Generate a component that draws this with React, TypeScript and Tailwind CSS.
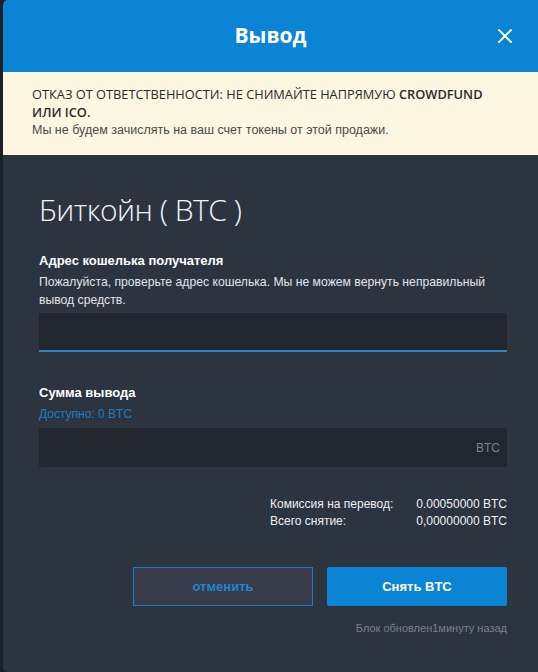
import React from "react";

export default function App() {
  return (
    <div className="w-[538px] h-[672px] bg-[#1b2029] flex overflow-hidden" style={{ fontFamily: '"Liberation Sans", Arial, sans-serif' }}>
      <div className="ml-[3px] w-[535px] h-[672px] rounded-l-[5px] overflow-hidden bg-[#2c3440] flex flex-col">
        {/* Header */}
        <div className="h-[72px] bg-[#0b85d3] relative flex items-center justify-center shrink-0">
          <span className="text-white text-[21px] font-bold" style={{ fontFamily: '"Open Sans", sans-serif' }}>Вывод</span>
          <svg className="absolute left-[494px] top-[28px]" width="16" height="16" viewBox="0 0 16 16" fill="none" stroke="#ffffff" strokeWidth="1.8" strokeLinecap="round">
            <path d="M2 2 L14 14 M14 2 L2 14" />
          </svg>
        </div>
        {/* Disclaimer */}
        <div className="h-[83px] bg-[#fdf6e0] pl-[29px] pr-[20px] pt-[14px] shrink-0 leading-[17.5px]" style={{ fontFamily: '"Open Sans", sans-serif' }}>
          <div className="text-[#2a2a2a] text-[12.8px] whitespace-nowrap">
            ОТКАЗ ОТ ОТВЕТСТВЕННОСТИ: НЕ СНИМАЙТЕ НАПРЯМУЮ <span className="font-semibold">CROWDFUND</span>
          </div>
          <div className="text-[#2a2a2a] text-[12.8px] font-semibold">ИЛИ ICO.</div>
          <div className="text-[#4a4a4a] text-[12.5px] mt-[1px]" style={{ fontFamily: '"Liberation Sans", Arial, sans-serif' }}>Мы не будем зачислять на ваш счет токены от этой продажи.</div>
        </div>
        {/* Body */}
        <div className="pl-[36px] pr-[31px] pt-[37px] flex flex-col">
          <div className="text-[30px] leading-[36px] font-light tracking-[-0.5px] text-[#f3f4f6]" style={{ fontFamily: '"Open Sans", sans-serif' }}>Биткойн ( BTC )</div>

          <div className="mt-[24px] text-[13px] leading-[18px] font-bold text-white">Адрес кошелька получателя</div>
          <div className="mt-[3px] text-[12.2px] leading-[18px] text-[#e2e4e8]">Пожалуйста, проверьте адрес кошелька. Мы не можем вернуть неправильный вывод средств.</div>
          <div className="mt-[4px] h-[39px] bg-[#22272f] border-b-2 border-[#2a85c8] rounded-t-[2px]" />

          <div className="mt-[32px] text-[13px] leading-[18px] font-bold text-white">Сумма вывода</div>
          <div className="mt-[3px] text-[12px] leading-[18px] text-[#1d7fc4]">Доступно: 0 BTC</div>
          <div className="mt-[5px] h-[39px] bg-[#22272f] rounded-[2px] flex items-center justify-end pr-[7px]">
            <span className="text-[12px] text-[#7c828b]">BTC</span>
          </div>

          <div className="mt-[29px] flex flex-col items-end text-[12px] leading-[17px] text-[#eef0f3]">
            <div className="flex">
              <span className="w-[143px]">Комиссия на перевод:</span>
              <span className="w-[94px] text-right">0.00050000 BTC</span>
            </div>
            <div className="flex">
              <span className="w-[143px]">Всего снятие:</span>
              <span className="w-[94px] text-right">0,00000000 BTC</span>
            </div>
          </div>

          <div className="mt-[37px] flex justify-end gap-[14px]">
            <button className="w-[180px] h-[39px] bg-[#363c49] border border-[#1b7cc0] text-[#1f86cf] text-[13px] font-bold">отменить</button>
            <button className="w-[180px] h-[39px] bg-[#0b85d3] rounded-[2px] text-white text-[13px] font-bold">Снять BTC</button>
          </div>

          <div className="mt-[15px] text-right text-[11px] leading-[14px] text-[#7b818a]">Блок обновлен1минуту назад</div>
        </div>
      </div>
    </div>
  );
}
